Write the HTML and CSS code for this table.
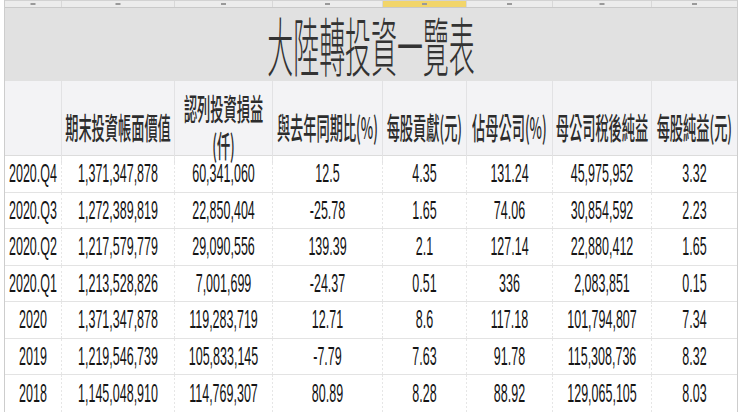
FILE: index.html
```html
<!DOCTYPE html>
<html lang="zh-Hant">
<head>
<meta charset="utf-8">
<title>大陸轉投資一覽表</title>
<link rel="stylesheet" href="styles.css">
</head>
<body>
<div class="page">
  <div class="sheet">
    <div class="colbar">
      <div class="cb"><i></i></div><div class="cb"><i></i></div><div class="cb"><i></i></div><div class="cb"><i></i></div>
      <div class="cb sel"><i></i></div><div class="cb"><i></i></div><div class="cb"><i></i></div><div class="cb"><i></i></div>
    </div>
    <div class="title"><span class="title-text">大陸轉投資一覽表</span></div>
    <div class="grid hdr">
      <div class="c"></div>
      <div class="c"><span class="t">期末投資帳面價值</span></div>
      <div class="c"><span class="t">認列投資損益<br>(仟)</span></div>
      <div class="c"><span class="t">與去年同期比(%)</span></div>
      <div class="c"><span class="t">每股貢獻(元)</span></div>
      <div class="c"><span class="t">佔母公司(%)</span></div>
      <div class="c"><span class="t">母公司稅後純益</span></div>
      <div class="c"><span class="t">每股純益(元)</span></div>
    </div>
    <div class="grid row">
      <div class="c">2020.Q4</div><div class="c">1,371,347,878</div><div class="c">60,341,060</div><div class="c">12.5</div><div class="c">4.35</div><div class="c">131.24</div><div class="c">45,975,952</div><div class="c">3.32</div>
    </div>
    <div class="grid row">
      <div class="c">2020.Q3</div><div class="c">1,272,389,819</div><div class="c">22,850,404</div><div class="c">-25.78</div><div class="c">1.65</div><div class="c">74.06</div><div class="c">30,854,592</div><div class="c">2.23</div>
    </div>
    <div class="grid row">
      <div class="c">2020.Q2</div><div class="c">1,217,579,779</div><div class="c">29,090,556</div><div class="c">139.39</div><div class="c">2.1</div><div class="c">127.14</div><div class="c">22,880,412</div><div class="c">1.65</div>
    </div>
    <div class="grid row">
      <div class="c">2020.Q1</div><div class="c">1,213,528,826</div><div class="c">7,001,699</div><div class="c">-24.37</div><div class="c">0.51</div><div class="c">336</div><div class="c">2,083,851</div><div class="c">0.15</div>
    </div>
    <div class="grid row">
      <div class="c">2020</div><div class="c">1,371,347,878</div><div class="c">119,283,719</div><div class="c">12.71</div><div class="c">8.6</div><div class="c">117.18</div><div class="c">101,794,807</div><div class="c">7.34</div>
    </div>
    <div class="grid row">
      <div class="c">2019</div><div class="c">1,219,546,739</div><div class="c">105,833,145</div><div class="c">-7.79</div><div class="c">7.63</div><div class="c">91.78</div><div class="c">115,308,736</div><div class="c">8.32</div>
    </div>
    <div class="grid row last">
      <div class="c">2018</div><div class="c">1,145,048,910</div><div class="c">114,769,307</div><div class="c">80.89</div><div class="c">8.28</div><div class="c">88.92</div><div class="c">129,065,105</div><div class="c">8.03</div>
    </div>
  </div>
</div>
</body>
</html>
```
FILE: styles.css
```css
html, body {
  margin: 0;
  padding: 0;
  background: #ffffff;
  overflow: hidden;
}

.page {
  width: 1480px;
  height: 416px;
  box-sizing: border-box;
  padding-left: 8px;
  transform: scaleX(0.5);
  transform-origin: 0 0;
}

.sheet {
  width: 1464px;
  border-left: 2px solid #cdcdcd;
  border-right: 2px solid #cdcdcd;
}

.grid,
.colbar {
  display: grid;
  grid-template-columns: 114px 226px 196px 220px 168px 172px 198px 170px;
}

.colbar {
  height: 6px;
  border-top: 1px solid #d2d2d2;
  border-bottom: 1px solid #c9c9c9;
  background: #ececec;
}

.cb {
  display: flex;
  justify-content: center;
  align-items: center;
  border-right: 2px solid #d8d8d8;
}

.cb i {
  display: block;
  width: 10px;
  height: 2px;
  background: #9a9a9a;
}

.cb.sel {
  background: #f2d56a;
}

.title {
  height: 73px;
  background: #e1e1e1;
  display: flex;
  justify-content: center;
  align-items: center;
  padding-bottom: 2px;
  box-sizing: border-box;
  font-family: "Noto Sans CJK TC", "Noto Sans", sans-serif;
  font-size: 64px;
  font-weight: 300;
  line-height: 1.1;
  color: #333333;
}

.title-text {
  display: inline-block;
  white-space: nowrap;
  transform: scaleX(0.81);
}

.hdr {
  height: 75px;
  background: #f3f3f5;
  border-bottom: 1px solid #dcdcdc;
  box-sizing: border-box;
  font-family: "Noto Sans CJK TC", "Noto Sans", sans-serif;
  font-size: 30px;
  font-weight: 500;
  line-height: 37px;
  color: #2c2c2c;
}

.hdr .c {
  display: flex;
  justify-content: center;
  align-items: center;
  text-align: center;
  white-space: nowrap;
  padding-top: 8px;
  border-right: 2px solid #e2e2e4;
}

.hdr .t {
  display: inline-block;
  transform: scaleX(0.88);
}

.row {
  height: 36.5px;
  box-sizing: border-box;
  border-bottom: 1px solid #e3e3e3;
  font-family: "Liberation Sans", Arial, sans-serif;
  font-size: 25px;
  color: #151515;
}

.row.last {
  border-bottom: none;
}

.row .c {
  display: flex;
  justify-content: center;
  align-items: center;
  white-space: nowrap;
  border-right: 2px dotted #e6e6e6;
}

.grid .c:last-child,
.colbar .cb:last-child {
  border-right: none;
}
```
